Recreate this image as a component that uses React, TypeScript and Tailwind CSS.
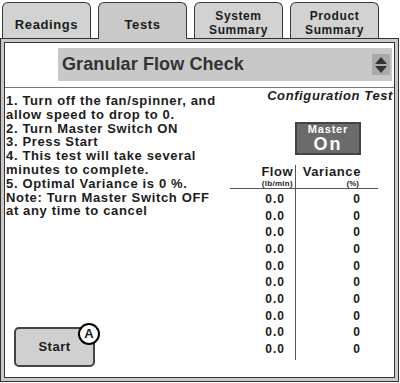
import { ReactNode } from "react";

const Tab = ({ children, active, pad }: { children: ReactNode; active?: boolean; pad?: boolean }) => (
  <div
    className={
      (active
        ? "relative z-10 -mb-[1px] h-[37px] bg-[#c9c9c9] "
        : "h-[36px] bg-[#d2d2d2] ") +
      (pad ? "pt-[8px] " : "pt-[4px] ") +
      "flex w-[89px] items-center justify-center rounded-t-[6px] border border-b-0 border-[#3a3a3a] text-center"
    }
  >
    {children}
  </div>
);

const steps = [
  "1. Turn off the fan/spinner, and",
  "allow speed to drop to 0.",
  "2. Turn Master Switch ON",
  "3. Press Start",
  "4. This test will take several",
  "minutes to complete.",
  "5. Optimal Variance is 0 %.",
  "Note: Turn Master Switch OFF",
  "at any time to cancel",
];

const rows = Array.from({ length: 10 }, () => ({ flow: "0.0", variance: "0" }));

export default function App() {
  return (
    <div
      className="h-[383px] w-[400px] overflow-hidden bg-white text-[#1c1c1c]"
      style={{ fontFamily: '"Liberation Sans", Arial, sans-serif' }}
    >
      {/* tabs */}
      <div className="flex h-[38px] items-end gap-[7px] pl-[2px] font-bold">
        <Tab pad>
          <span className="text-[13px] tracking-[0.6px]">Readings</span>
        </Tab>
        <Tab active pad>
          <span className="text-[13px] tracking-[0.6px]">Tests</span>
        </Tab>
        <Tab>
          <span className="text-[12px] leading-[14px] tracking-[0.6px]">
            System
            <br />
            Summary
          </span>
        </Tab>
        <Tab>
          <span className="text-[12px] leading-[14px] tracking-[0.6px]">
            Product
            <br />
            Summary
          </span>
        </Tab>
      </div>

      {/* frame */}
      <div className="h-[344px] w-[399px] border border-[#333] bg-[#c9c9c9] p-[3px]">
        <div className="flex h-full flex-col border border-[#333] bg-white">
          <div className="ml-[53px] mr-[2px] mt-[5px] flex h-[33px] items-center justify-between bg-[#c8c8c8] pl-[4px] pr-[2px]">
            <span className="text-[18px] font-bold tracking-[0.1px] text-[#333]">
              Granular Flow Check
            </span>
            <div className="flex h-[21px] w-[18px] flex-col items-center justify-center gap-[2px] bg-[#a9a9a9]">
              <svg width="12" height="7" viewBox="0 0 12 7">
                <polygon points="6,0 12,7 0,7" fill="#333" />
              </svg>
              <svg width="12" height="7" viewBox="0 0 12 7">
                <polygon points="0,0 12,0 6,7" fill="#333" />
              </svg>
            </div>
          </div>
          <div className="mt-[6px] h-px bg-[#777]" />

          <div className="flex flex-1">
            {/* instructions */}
            <div className="flex w-[225px] flex-col pl-[1px]">
              <div className="mt-[6px] text-[13px] font-bold leading-[13.8px] tracking-[0.65px]">
                {steps.map((s) => (
                  <div key={s} className="whitespace-nowrap">
                    {s}
                  </div>
                ))}
              </div>
              <div className="relative mb-[10px] ml-[8px] mt-auto h-[40px] w-[81px]">
                <button className="flex h-full w-full items-center justify-center rounded-[5px] border-2 border-[#444] bg-[#d0d0d0] text-[13px] font-bold tracking-[0.5px]">
                  Start
                </button>
                <div className="absolute -right-[5px] -top-[4px] flex h-[22px] w-[22px] items-center justify-center rounded-full border-2 border-black bg-white text-[13px] font-bold">
                  A
                </div>
              </div>
            </div>

            {/* results */}
            <div className="flex flex-1 flex-col">
              <div className="mt-[1px] pr-[1px] text-right text-[13px] font-bold italic leading-[14px] tracking-[0.6px]">
                Configuration Test
              </div>
              <div className="ml-[65px] mt-[19px] flex h-[33px] w-[66px] flex-col items-center justify-center border-2 border-[#444] bg-[#6b6b6b] font-bold text-white">
                <span className="text-[11px] leading-[11px] tracking-[0.8px]">Master</span>
                <span className="text-[18px] leading-[18px] tracking-[2px]">On</span>
              </div>
              <div className="mt-[10px] flex font-bold">
                <div className="w-[66px] border-r border-[#555] pb-[2px]">
                  <div className="h-[23px] pr-[2px] text-right">
                    <div className="text-[13px] leading-[14px] tracking-[0.5px]">Flow</div>
                    <div className="text-[8px] leading-[9px] tracking-[0.3px]">(lb/min)</div>
                  </div>
                  <div className="border-t border-[#555] pt-[2px]">
                    {rows.map((r, i) => (
                      <div key={i} className="pr-[10px] text-right text-[12px] leading-[16.67px] tracking-[1px]">
                        {r.flow}
                      </div>
                    ))}
                  </div>
                </div>
                <div className="w-[82px]">
                  <div className="h-[23px] pr-[17px] text-right">
                    <div className="text-[13px] leading-[14px] tracking-[0.6px]">Variance</div>
                    <div className="pr-[2px] text-[8px] leading-[9px]">(%)</div>
                  </div>
                  <div className="border-t border-[#555] pt-[2px]">
                    {rows.map((r, i) => (
                      <div key={i} className="pr-[18px] text-right text-[12px] leading-[16.67px]">
                        {r.variance}
                      </div>
                    ))}
                  </div>
                </div>
              </div>
            </div>
          </div>
        </div>
      </div>
    </div>
  );
}
